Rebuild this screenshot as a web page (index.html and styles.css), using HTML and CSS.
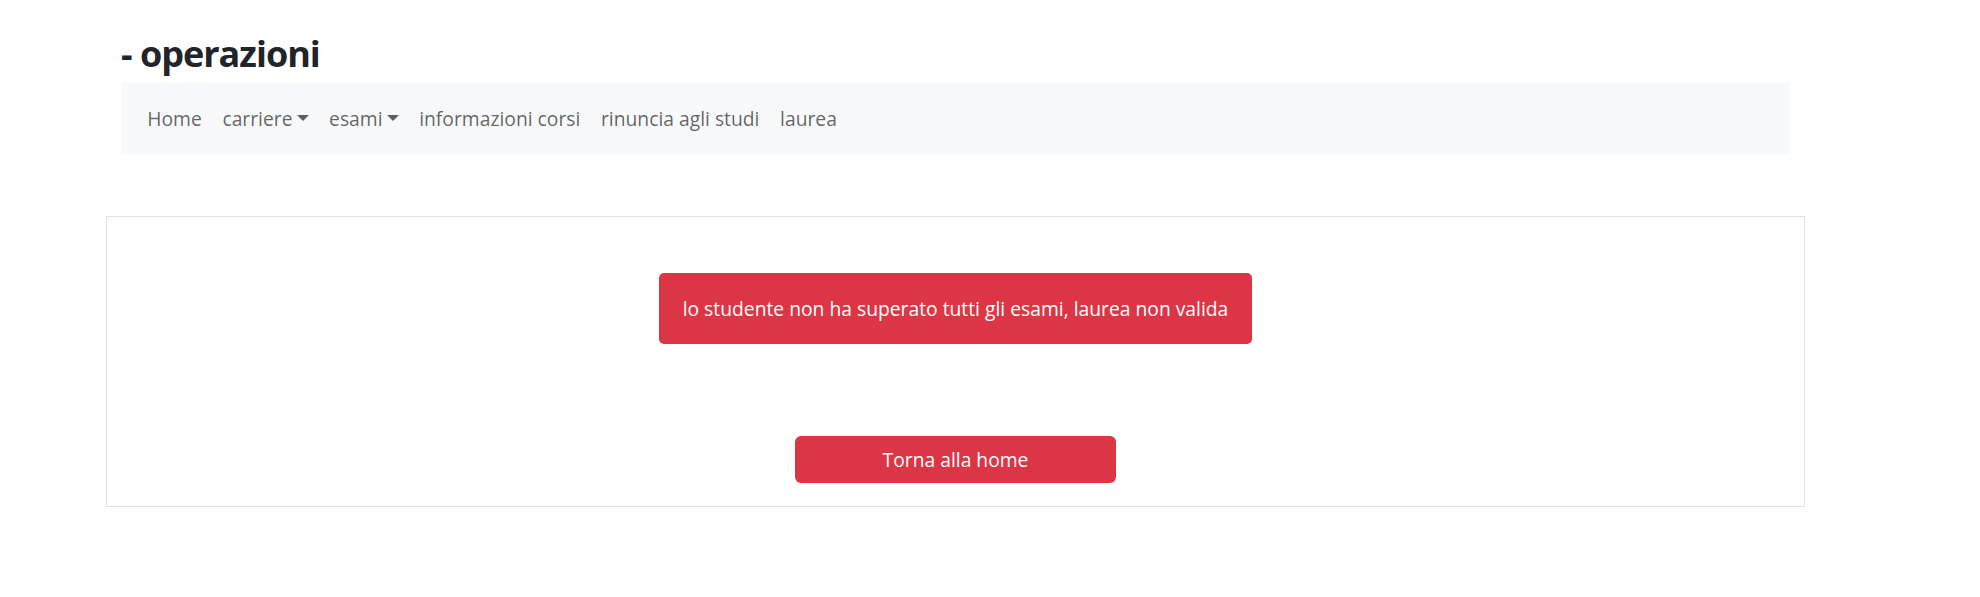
FILE: index.html
```html
<!DOCTYPE html>
<html lang="it">
<head>
<meta charset="utf-8">
<title>operazioni</title>
<link rel="stylesheet" href="styles.css">
</head>
<body>
<div class="page">
  <header class="top">
    <h2 class="title">- operazioni</h2>
    <nav class="navbar">
      <ul class="nav">
        <li><a class="nav-link" href="#">Home</a></li>
        <li><a class="nav-link dropdown-toggle" href="#">carriere</a></li>
        <li><a class="nav-link dropdown-toggle" href="#">esami</a></li>
        <li><a class="nav-link" href="#">informazioni corsi</a></li>
        <li><a class="nav-link" href="#">rinuncia agli studi</a></li>
        <li><a class="nav-link" href="#">laurea</a></li>
      </ul>
    </nav>
  </header>
  <main class="panel">
    <div class="alert-row">
      <div class="alert">lo studente non ha superato tutti gli esami, laurea non valida</div>
    </div>
    <div class="btn-row">
      <a class="btn" href="#">Torna alla home</a>
    </div>
  </main>
</div>
</body>
</html>
```
FILE: styles.css
```css
* { box-sizing: border-box; }
html, body {
  margin: 0;
  background: #fff;
}
body {
  font-family: "Open Sans", "Noto Sans", sans-serif;
  color: #212529;
}
.page {
  margin-left: 106px;
  width: 1699px;
}
.top {
  margin: 0 15px;
}
.title {
  margin: 0;
  padding-top: 36px;
  padding-bottom: 10px;
  font-size: 36px;
  font-weight: 700;
  line-height: 36px;
  color: #212529;
  letter-spacing: -1px;
}
.navbar {
  background: #f8f9fa;
  height: 72px;
  display: flex;
  align-items: center;
  padding: 2px 16px 0;
}
.nav {
  list-style: none;
  margin: 0;
  padding: 0;
  display: flex;
}
.nav-link {
  display: block;
  padding: 0 10.3px;
  font-size: 19.3px;
  line-height: 28px;
  color: rgba(0, 0, 0, 0.62);
  text-decoration: none;
}
.dropdown-toggle::after {
  content: "";
  display: inline-block;
  margin-left: 4px;
  vertical-align: 5px;
  border-top: 6px solid;
  border-left: 6px solid transparent;
  border-right: 6px solid transparent;
}
.panel {
  margin-top: 62px;
  border: 1px solid #dee2e6;
  height: 291px;
}
.alert-row {
  display: flex;
  justify-content: center;
  padding-top: 56px;
}
.alert {
  display: flex;
  align-items: center;
  justify-content: center;
  width: 593px;
  height: 71px;
  background: #dc3545;
  color: #fff;
  border-radius: 5px;
  font-size: 19.3px;
  white-space: nowrap;
}
.btn-row {
  display: flex;
  justify-content: center;
  margin-top: 92px;
}
.btn {
  display: flex;
  align-items: center;
  justify-content: center;
  width: 321px;
  height: 47px;
  background: #dc3545;
  color: #fff;
  border-radius: 6px;
  font-size: 19.3px;
  text-decoration: none;
}
```
